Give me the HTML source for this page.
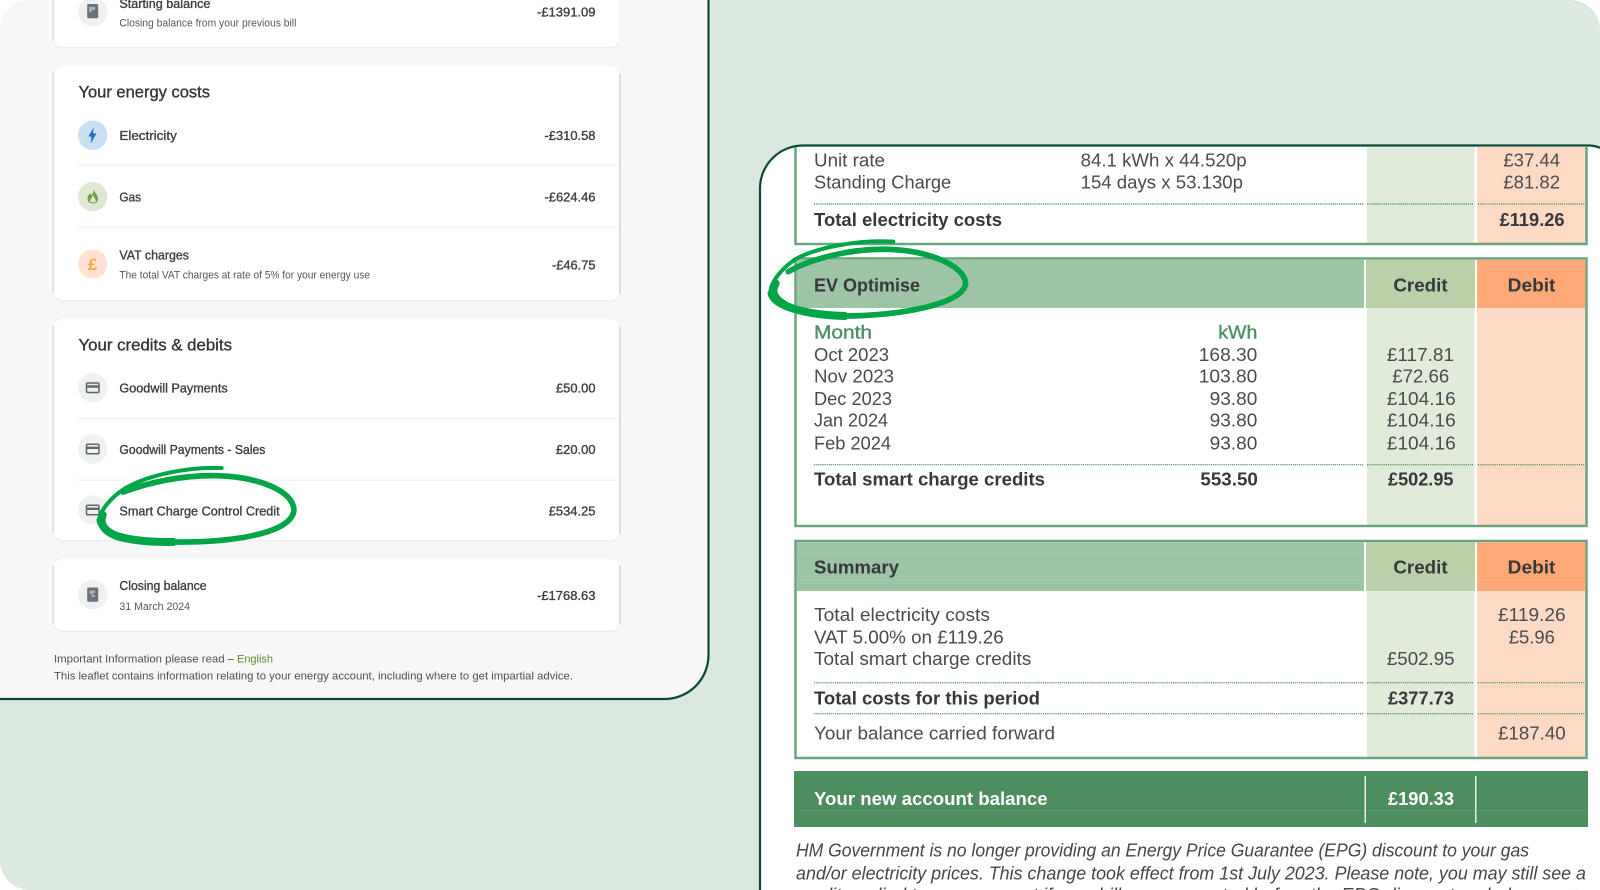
<!DOCTYPE html>
<html lang="en"><head><meta charset="utf-8"><title>Bill comparison</title>
<style>
html,body{margin:0;padding:0;background:#fff;width:1600px;height:890px;overflow:hidden}
svg{display:block;filter:blur(.3px)}
text{font-family:"Liberation Sans",sans-serif;white-space:pre}
.m{font-size:13px;fill:#3b3e40;stroke:#3b3e40;stroke-width:.35}
.s{font-size:11px;fill:#555859}
.h{font-size:16.5px;fill:#333638;stroke:#333638;stroke-width:.35}
.r{font-size:18px;fill:#4a4b4c}
.b{font-size:18px;font-weight:700;fill:#36383a}
.g{font-size:18px;fill:#4f9065;stroke:#4f9065;stroke-width:.4}
.w{font-size:18px;font-weight:700;fill:#fff}
.i{font-size:18px;font-style:italic;fill:#454647}
.dot{stroke:#5f9f6f;stroke-width:1.4;stroke-dasharray:1.2 .9;fill:none}
</style></head>
<body>
<svg width="1600" height="890" viewBox="0 0 1600 890" xmlns="http://www.w3.org/2000/svg">
<defs><clipPath id="page"><rect width="1600" height="890" rx="30" ry="30"/></clipPath></defs>
<g clip-path="url(#page)">
<rect width="1600" height="890" fill="#dae8df"/>

<!-- LEFT PANEL -->
<path d="M-5 699H664A44 44 0 0 0 708.500 655V-5H-5Z" fill="#f7f7f7" stroke="#0b4a35" stroke-width="2.2"/>

<!-- card shadows -->
<rect x="52.500" y="-5" width="2" height="46" fill="#dcdcdc"/>
<rect x="54" y="-10" width="565" height="58.500" rx="8" fill="#ececec"/>
<rect x="54" y="-10" width="565" height="57" rx="8" fill="#fff"/>

<rect x="52.500" y="72" width="2" height="221" fill="#dcdcdc"/>
<rect x="618" y="74" width="3" height="220" fill="#dcdcdc"/>
<rect x="54" y="66" width="565" height="235.500" rx="8" fill="#ececec"/>
<rect x="54" y="66" width="565" height="234" rx="8" fill="#fff"/>

<rect x="52.500" y="326" width="2" height="207" fill="#dcdcdc"/>
<rect x="618" y="327" width="3" height="207" fill="#dcdcdc"/>
<rect x="54" y="319" width="565" height="222.500" rx="8" fill="#ececec"/>
<rect x="54" y="319" width="565" height="221" rx="8" fill="#fff"/>

<rect x="52.500" y="566" width="2" height="58" fill="#dcdcdc"/>
<rect x="618" y="566" width="3" height="58" fill="#dcdcdc"/>
<rect x="54" y="559" width="565" height="73" rx="8" fill="#ececec"/>
<rect x="54" y="559" width="565" height="71.500" rx="8" fill="#fff"/>

<!-- dividers -->
<rect x="78" y="164.500" width="541" height="1.800" fill="#f4f4f4"/>
<rect x="78" y="226.300" width="541" height="1.800" fill="#f4f4f4"/>
<rect x="78" y="417.500" width="541" height="1.800" fill="#f4f4f4"/>
<rect x="78" y="479.300" width="541" height="1.800" fill="#f4f4f4"/>

<!-- starting balance -->
<circle cx="92.700" cy="11.700" r="14.700" fill="#eff1f0"/>
<rect x="87.200" y="4" width="11" height="14.300" rx="1" fill="#6b737b"/>
<path d="M89 7H95V10H92V12H89Z" fill="#aab0b4"/>
<text class="m" x="119.400" y="8" textLength="91" lengthAdjust="spacingAndGlyphs">Starting balance</text>
<text class="s" x="119.400" y="26.700" textLength="177" lengthAdjust="spacingAndGlyphs">Closing balance from your previous bill</text>
<text class="m" x="537" y="16.700" textLength="58.500" lengthAdjust="spacingAndGlyphs">-£1391.09</text>

<!-- energy costs -->
<text class="h" x="78.500" y="97.700" textLength="131.500" lengthAdjust="spacingAndGlyphs">Your energy costs</text>
<circle cx="92.700" cy="135.300" r="14.700" fill="#cbdff3"/>
<path d="M93.800 127.500L88.300 136.500H91.500L90.800 143.300L96.500 133.400H93Z" fill="#1a6fc9"/>
<text class="m" x="119.400" y="140" textLength="57.400" lengthAdjust="spacingAndGlyphs">Electricity</text>
<text class="m" x="544.500" y="140" textLength="51" lengthAdjust="spacingAndGlyphs">-£310.58</text>

<circle cx="92.700" cy="196.700" r="14.700" fill="#dee8d3"/>
<path fill-rule="evenodd" d="M93.500 189C94 193 98 194 98 199C98 202 96 203.500 93 203.500C90 203.500 87.500 202 87.500 198.500C87.500 196 89.500 194.500 90 193C91 194 91.500 195 91.500 195.500C92.500 194 93.500 192 93.500 189ZM93 195C92 198 90 199.500 90 201.500C90.800 202.800 95.300 202.800 96 201.500C96 199.500 94 198 93 195Z" fill="#71a343"/>
<text class="m" x="119.400" y="201.300" textLength="21.600" lengthAdjust="spacingAndGlyphs">Gas</text>
<text class="m" x="544.500" y="201.300" textLength="51" lengthAdjust="spacingAndGlyphs">-£624.46</text>

<circle cx="92.700" cy="264" r="14.700" fill="#fde2d4"/>
<text x="92.700" y="270" text-anchor="middle" style="font-size:17px;font-weight:700;fill:#fca93a">£</text>
<text class="m" x="119.400" y="259.300" textLength="69.600" lengthAdjust="spacingAndGlyphs">VAT charges</text>
<text class="s" x="119.400" y="278.300" textLength="250.600" lengthAdjust="spacingAndGlyphs">The total VAT charges at rate of 5% for your energy use</text>
<text class="m" x="552" y="269.300" textLength="43.500" lengthAdjust="spacingAndGlyphs">-£46.75</text>

<!-- credits -->
<text class="h" x="78.500" y="350.700" textLength="153.500" lengthAdjust="spacingAndGlyphs">Your credits &amp; debits</text>
<circle cx="92.700" cy="387.700" r="14.700" fill="#eff1f0"/>
<g fill="none" stroke="#5d6770"><rect x="86.500" y="383" width="12.500" height="9.500" rx="1.200" stroke-width="1.500"/><path d="M86.500 386.500H99" stroke-width="2.400"/></g>
<text class="m" x="119.400" y="392.700" textLength="108.300" lengthAdjust="spacingAndGlyphs">Goodwill Payments</text>
<text class="m" x="556" y="392.700" textLength="39.500" lengthAdjust="spacingAndGlyphs">£50.00</text>

<circle cx="92.700" cy="449" r="14.700" fill="#eff1f0"/>
<g fill="none" stroke="#5d6770"><rect x="86.500" y="444.300" width="12.500" height="9.500" rx="1.200" stroke-width="1.500"/><path d="M86.500 447.800H99" stroke-width="2.400"/></g>
<text class="m" x="119.400" y="454" textLength="146" lengthAdjust="spacingAndGlyphs">Goodwill Payments - Sales</text>
<text class="m" x="556" y="454" textLength="39.500" lengthAdjust="spacingAndGlyphs">£20.00</text>

<circle cx="92.700" cy="510" r="14.700" fill="#eff1f0"/>
<g fill="none" stroke="#5d6770"><rect x="86.500" y="505.300" width="12.500" height="9.500" rx="1.200" stroke-width="1.500"/><path d="M86.500 508.800H99" stroke-width="2.400"/></g>
<text class="m" x="119.400" y="515.300" textLength="160.200" lengthAdjust="spacingAndGlyphs">Smart Charge Control Credit</text>
<text class="m" x="548.700" y="515.300" textLength="46.800" lengthAdjust="spacingAndGlyphs">£534.25</text>

<!-- closing -->
<circle cx="92.700" cy="594.700" r="14.700" fill="#eff1f0"/>
<rect x="87.200" y="587.500" width="11" height="14.300" rx="1" fill="#6b737b"/>
<path d="M89.500 590.500H95V593H93V595H95V597H91.500V594H89.500Z" fill="#aab0b4"/>
<text class="m" x="119.400" y="590" textLength="87.200" lengthAdjust="spacingAndGlyphs">Closing balance</text>
<text class="s" x="119.400" y="610" textLength="70.600" lengthAdjust="spacingAndGlyphs">31 March 2024</text>
<text class="m" x="537" y="600" textLength="58.500" lengthAdjust="spacingAndGlyphs">-£1768.63</text>

<!-- footer -->
<text class="s" x="54" y="662.300" textLength="180" lengthAdjust="spacingAndGlyphs" style="fill:#4d5051">Important Information please read –</text>
<text class="s" x="237" y="662.300" textLength="36" lengthAdjust="spacingAndGlyphs" style="fill:#5f8a32">English</text>
<text class="s" x="54" y="679.300" textLength="519" lengthAdjust="spacingAndGlyphs" style="fill:#4d5051">This leaflet contains information relating to your energy account, including where to get impartial advice.</text>

<!-- scribble left -->
<g transform="translate(70 460) scale(.3333)" fill="none" stroke="#00a548" stroke-linecap="round" stroke-linejoin="round">
<path stroke-width="12" d="M455 24C350 20 235 45 165 85C115 118 85 160 88 185"/>
<path stroke-width="17" d="M88 180C92 225 190 247 310 246C470 248 665 225 672 150C670 90 560 50 440 47C330 45 230 70 160 96"/>
<path stroke-width="24" d="M98 165C88 190 100 212 140 228C180 240 240 247 310 246"/>
</g>

<!-- RIGHT PANEL -->
<path d="M760 895V188A43 43 0 0 1 803 145.500H1590Q1598 146 1605 150V895Z" fill="#fff" stroke="#0b4a35" stroke-width="2.200"/>

<!-- Column fills -->
<rect x="1367" y="147" width="107.500" height="96" fill="#e1ebd9"/>
<rect x="1477" y="147" width="108.500" height="96" fill="#fedac4"/>
<rect x="1367" y="308" width="107.500" height="217" fill="#e1ebd9"/>
<rect x="1477" y="308" width="108.500" height="217" fill="#fedac4"/>
<rect x="1367" y="591" width="107.500" height="166" fill="#e1ebd9"/>
<rect x="1477" y="591" width="108.500" height="166" fill="#fedac4"/>

<!-- Box 1 -->
<path d="M795.500 147V244H1586.500V147" fill="none" stroke="#6aa37c" stroke-width="2.500"/>

<!-- Box 2 -->
<rect x="795.500" y="258.500" width="791" height="267.500" fill="none" stroke="#6aa37c" stroke-width="2.500"/>
<rect x="796.500" y="260" width="567.500" height="48" fill="#9cc4a5"/>
<rect x="1366" y="260" width="109" height="48" fill="#b9d0a8"/>
<rect x="1477" y="260" width="108.500" height="48" fill="#fea878"/>
<rect x="797" y="269" width="788" height="1" fill="#fff" opacity=".1"/>
<rect x="797" y="296.500" width="788" height="1" fill="#fff" opacity=".1"/>

<!-- Box 3 -->
<rect x="795.500" y="541" width="791" height="217" fill="none" stroke="#6aa37c" stroke-width="2.500"/>
<rect x="796.500" y="542.500" width="567.500" height="48.500" fill="#9cc4a5"/>
<rect x="1366" y="542.500" width="109" height="48.500" fill="#b9d0a8"/>
<rect x="1477" y="542.500" width="108.500" height="48.500" fill="#fea878"/>
<rect x="797" y="552" width="788" height="1" fill="#fff" opacity=".1"/>
<rect x="797" y="579.500" width="788" height="1" fill="#fff" opacity=".1"/>

<!-- Balance bar -->
<rect x="794" y="771" width="794" height="56" fill="#4d8e5e"/>
<rect x="794" y="810" width="794" height="1" fill="#fff" opacity=".08"/>
<rect x="1364.500" y="776" width="1.500" height="47" fill="#fff" opacity=".85"/>
<rect x="1475" y="776" width="1.500" height="47" fill="#fff" opacity=".85"/>

<!-- Dotted lines -->
<path class="dot" d="M814 204H1363.500M1367 204H1473M1478 204H1584.500"/>
<path class="dot" d="M814 464.700H1363.500M1367 464.700H1473M1478 464.700H1584.500"/>
<path class="dot" d="M814 682.700H1363.500M1367 682.700H1473M1478 682.700H1584.500"/>
<path class="dot" d="M814 713.700H1363.500M1367 713.700H1473M1478 713.700H1584.500"/>

<!-- Box 1 text -->
<text class="r" x="814" y="166.700" textLength="71" lengthAdjust="spacingAndGlyphs">Unit rate</text>
<text class="r" x="1080.600" y="166.700" textLength="166" lengthAdjust="spacingAndGlyphs">84.1 kWh x 44.520p</text>
<text class="r" x="1503.400" y="166.700" textLength="56.600" lengthAdjust="spacingAndGlyphs">£37.44</text>
<text class="r" x="814" y="188.700" textLength="137.200" lengthAdjust="spacingAndGlyphs">Standing Charge</text>
<text class="r" x="1080.600" y="188.700" textLength="162.400" lengthAdjust="spacingAndGlyphs">154 days x 53.130p</text>
<text class="r" x="1503.400" y="188.700" textLength="56.600" lengthAdjust="spacingAndGlyphs">£81.82</text>
<text class="b" x="814" y="226" textLength="188" lengthAdjust="spacingAndGlyphs">Total electricity costs</text>
<text class="b" x="1499.600" y="226" textLength="65" lengthAdjust="spacingAndGlyphs">£119.26</text>

<!-- Box 2 text -->
<text class="b" x="814" y="291.700" textLength="106" lengthAdjust="spacingAndGlyphs">EV Optimise</text>
<text class="b" x="1393.400" y="291.700" textLength="54.200" lengthAdjust="spacingAndGlyphs">Credit</text>
<text class="b" x="1507.700" y="291.700" textLength="47.700" lengthAdjust="spacingAndGlyphs">Debit</text>
<text class="g" x="814" y="338.300" textLength="58" lengthAdjust="spacingAndGlyphs">Month</text>
<text class="g" x="1218.300" y="338.300" textLength="39" lengthAdjust="spacingAndGlyphs">kWh</text>
<text class="r" x="814" y="361" textLength="75" lengthAdjust="spacingAndGlyphs">Oct 2023</text>
<text class="r" x="1198.800" y="361" textLength="58.500" lengthAdjust="spacingAndGlyphs">168.30</text>
<text class="r" x="1386.900" y="361" textLength="67.100" lengthAdjust="spacingAndGlyphs">£117.81</text>
<text class="r" x="814" y="382.700" textLength="80" lengthAdjust="spacingAndGlyphs">Nov 2023</text>
<text class="r" x="1198.800" y="382.700" textLength="58.500" lengthAdjust="spacingAndGlyphs">103.80</text>
<text class="r" x="1392.300" y="382.700" textLength="56.900" lengthAdjust="spacingAndGlyphs">£72.66</text>
<text class="r" x="814" y="405" textLength="78" lengthAdjust="spacingAndGlyphs">Dec 2023</text>
<text class="r" x="1209.600" y="405" textLength="47.700" lengthAdjust="spacingAndGlyphs">93.80</text>
<text class="r" x="1386.900" y="405" textLength="68.800" lengthAdjust="spacingAndGlyphs">£104.16</text>
<text class="r" x="814" y="426.700" textLength="74" lengthAdjust="spacingAndGlyphs">Jan 2024</text>
<text class="r" x="1209.600" y="426.700" textLength="47.700" lengthAdjust="spacingAndGlyphs">93.80</text>
<text class="r" x="1386.900" y="426.700" textLength="68.800" lengthAdjust="spacingAndGlyphs">£104.16</text>
<text class="r" x="814" y="449.300" textLength="77" lengthAdjust="spacingAndGlyphs">Feb 2024</text>
<text class="r" x="1209.600" y="449.300" textLength="47.700" lengthAdjust="spacingAndGlyphs">93.80</text>
<text class="r" x="1386.900" y="449.300" textLength="68.800" lengthAdjust="spacingAndGlyphs">£104.16</text>
<text class="b" x="814" y="485.700" textLength="231" lengthAdjust="spacingAndGlyphs">Total smart charge credits</text>
<text class="b" x="1200.400" y="485.700" textLength="57.500" lengthAdjust="spacingAndGlyphs">553.50</text>
<text class="b" x="1388" y="485.700" textLength="65.500" lengthAdjust="spacingAndGlyphs">£502.95</text>

<!-- Box 3 text -->
<text class="b" x="814" y="573.300" textLength="85" lengthAdjust="spacingAndGlyphs">Summary</text>
<text class="b" x="1393.400" y="573.300" textLength="54.200" lengthAdjust="spacingAndGlyphs">Credit</text>
<text class="b" x="1507.700" y="573.300" textLength="47.700" lengthAdjust="spacingAndGlyphs">Debit</text>
<text class="r" x="814" y="621" textLength="176" lengthAdjust="spacingAndGlyphs">Total electricity costs</text>
<text class="r" x="1498" y="621" textLength="67.700" lengthAdjust="spacingAndGlyphs">£119.26</text>
<text class="r" x="814" y="643.300" textLength="189.700" lengthAdjust="spacingAndGlyphs">VAT 5.00% on £119.26</text>
<text class="r" x="1508.800" y="643.300" textLength="46.100" lengthAdjust="spacingAndGlyphs">£5.96</text>
<text class="r" x="814" y="665" textLength="217.300" lengthAdjust="spacingAndGlyphs">Total smart charge credits</text>
<text class="r" x="1386.900" y="665" textLength="67.700" lengthAdjust="spacingAndGlyphs">£502.95</text>
<text class="b" x="814" y="704.300" textLength="226" lengthAdjust="spacingAndGlyphs">Total costs for this period</text>
<text class="b" x="1388" y="704.300" textLength="66" lengthAdjust="spacingAndGlyphs">£377.73</text>
<text class="r" x="814" y="739.300" textLength="241" lengthAdjust="spacingAndGlyphs">Your balance carried forward</text>
<text class="r" x="1498" y="739.300" textLength="67.700" lengthAdjust="spacingAndGlyphs">£187.40</text>

<!-- Balance text -->
<text class="w" x="814" y="805" textLength="233.600" lengthAdjust="spacingAndGlyphs">Your new account balance</text>
<text class="w" x="1388" y="805" textLength="66" lengthAdjust="spacingAndGlyphs">£190.33</text>

<!-- Italic paragraph -->
<text class="i" x="796" y="856.700" textLength="733" lengthAdjust="spacingAndGlyphs">HM Government is no longer providing an Energy Price Guarantee (EPG) discount to your gas</text>
<text class="i" x="796" y="879.300" textLength="790" lengthAdjust="spacingAndGlyphs">and/or electricity prices. This change took effect from 1st July 2023. Please note, you may still see a</text>
<text class="i" x="796" y="901" textLength="720" lengthAdjust="spacingAndGlyphs">credit applied to your account if your bill was generated before the EPG discount ended.</text>

<!-- scribble right -->
<g transform="translate(755 230) scale(.3333)" fill="none" stroke="#00a548" stroke-linecap="round" stroke-linejoin="round">
<path stroke-width="12" d="M415 35C320 28 190 50 120 88C75 120 45 160 46 190"/>
<path stroke-width="17" d="M46 190C55 235 160 258 270 258C420 258 630 225 632 158C625 105 520 62 400 58C290 55 170 85 100 125"/>
<path stroke-width="24" d="M62 160C46 185 58 208 95 228C135 246 200 256 270 258"/>
</g>
</g>
</svg>
</body></html>
